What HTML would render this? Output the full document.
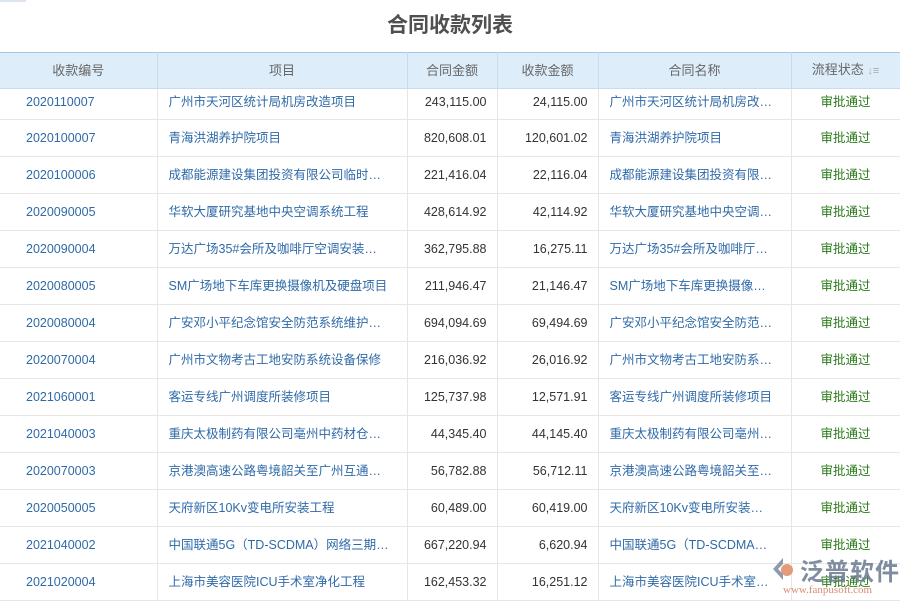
<!DOCTYPE html>
<html><head><meta charset="utf-8"><style>
body{margin:0;width:900px;height:600px;overflow:hidden;background:#fff;font-family:"Liberation Sans","Noto Sans CJK SC",sans-serif;position:relative}
.title{position:absolute;top:12px;left:0;width:900px;text-align:center;font-size:21px;font-weight:bold;color:#505050;line-height:28px}
.topbar{position:absolute;left:0;top:0;width:26px;height:2px;background:#dde6f0}
table{position:absolute;top:52px;left:0;border-collapse:collapse;table-layout:fixed;width:900px;font-size:12.5px}
th,td{line-height:16px;box-sizing:border-box}
th{height:36px;padding:0;background:#deedfa;color:#666;font-weight:normal;border-right:1px solid #c9dcee;border-top:1px solid #a9c6e2;border-bottom:1px solid #c9dcee;font-size:13px}
td{height:37px;border-bottom:1px solid #e6e6e6;border-right:1px solid #e6e6e6;white-space:nowrap;overflow:hidden;padding:0;vertical-align:middle}
tr.first td{height:31px;padding-bottom:5px}
.c1{color:#2f6aa8;padding-left:26px}
.c2{color:#2f6aa8;padding-left:11px}
.n{color:#333;text-align:right;padding-right:10px}
.c5{color:#2f6aa8;padding-left:11px}
.s{color:#2a7a1a;text-align:center}
.wm{position:absolute;top:552px;font-size:24px;color:#6a7a90;font-weight:bold;letter-spacing:1px;opacity:.85}
.wm2{position:absolute;left:783px;top:584px;font-size:11px;color:#d07050;opacity:.8;font-family:"Liberation Serif",serif}
</style></head><body>
<div class="topbar"></div>
<div class="title">合同收款列表</div>
<table>
<colgroup><col style="width:157px"><col style="width:250px"><col style="width:90px"><col style="width:101px"><col style="width:193px"><col style="width:109px"></colgroup>
<tr><th>收款编号</th><th>项目</th><th>合同金额</th><th>收款金额</th><th>合同名称</th><th>流程状态 <span style="color:#aaa;font-size:11px">↓≡</span></th></tr>
<tr class="first"><td class="c1">2020110007</td><td class="c2">广州市天河区统计局机房改造项目</td><td class="n">243,115.00</td><td class="n">24,115.00</td><td class="c5">广州市天河区统计局机房改…</td><td class="s">审批通过</td></tr>
<tr><td class="c1">2020100007</td><td class="c2">青海洪湖养护院项目</td><td class="n">820,608.01</td><td class="n">120,601.02</td><td class="c5">青海洪湖养护院项目</td><td class="s">审批通过</td></tr>
<tr><td class="c1">2020100006</td><td class="c2">成都能源建设集团投资有限公司临时…</td><td class="n">221,416.04</td><td class="n">22,116.04</td><td class="c5">成都能源建设集团投资有限…</td><td class="s">审批通过</td></tr>
<tr><td class="c1">2020090005</td><td class="c2">华软大厦研究基地中央空调系统工程</td><td class="n">428,614.92</td><td class="n">42,114.92</td><td class="c5">华软大厦研究基地中央空调…</td><td class="s">审批通过</td></tr>
<tr><td class="c1">2020090004</td><td class="c2">万达广场35#会所及咖啡厅空调安装…</td><td class="n">362,795.88</td><td class="n">16,275.11</td><td class="c5">万达广场35#会所及咖啡厅…</td><td class="s">审批通过</td></tr>
<tr><td class="c1">2020080005</td><td class="c2">SM广场地下车库更换摄像机及硬盘项目</td><td class="n">211,946.47</td><td class="n">21,146.47</td><td class="c5">SM广场地下车库更换摄像…</td><td class="s">审批通过</td></tr>
<tr><td class="c1">2020080004</td><td class="c2">广安邓小平纪念馆安全防范系统维护…</td><td class="n">694,094.69</td><td class="n">69,494.69</td><td class="c5">广安邓小平纪念馆安全防范…</td><td class="s">审批通过</td></tr>
<tr><td class="c1">2020070004</td><td class="c2">广州市文物考古工地安防系统设备保修</td><td class="n">216,036.92</td><td class="n">26,016.92</td><td class="c5">广州市文物考古工地安防系…</td><td class="s">审批通过</td></tr>
<tr><td class="c1">2021060001</td><td class="c2">客运专线广州调度所装修项目</td><td class="n">125,737.98</td><td class="n">12,571.91</td><td class="c5">客运专线广州调度所装修项目</td><td class="s">审批通过</td></tr>
<tr><td class="c1">2021040003</td><td class="c2">重庆太极制药有限公司亳州中药材仓…</td><td class="n">44,345.40</td><td class="n">44,145.40</td><td class="c5">重庆太极制药有限公司亳州…</td><td class="s">审批通过</td></tr>
<tr><td class="c1">2020070003</td><td class="c2">京港澳高速公路粤境韶关至广州互通…</td><td class="n">56,782.88</td><td class="n">56,712.11</td><td class="c5">京港澳高速公路粤境韶关至…</td><td class="s">审批通过</td></tr>
<tr><td class="c1">2020050005</td><td class="c2">天府新区10Kv变电所安装工程</td><td class="n">60,489.00</td><td class="n">60,419.00</td><td class="c5">天府新区10Kv变电所安装…</td><td class="s">审批通过</td></tr>
<tr><td class="c1">2021040002</td><td class="c2">中国联通5G（TD-SCDMA）网络三期…</td><td class="n">667,220.94</td><td class="n">6,620.94</td><td class="c5">中国联通5G（TD-SCDMA…</td><td class="s">审批通过</td></tr>
<tr><td class="c1">2021020004</td><td class="c2">上海市美容医院ICU手术室净化工程</td><td class="n">162,453.32</td><td class="n">16,251.12</td><td class="c5">上海市美容医院ICU手术室…</td><td class="s">审批通过</td></tr>
</table>
<svg style="position:absolute;left:770px;top:556px" width="26" height="26" viewBox="0 0 26 26"><path d="M13 2 L3 13 L13 24 L13 18 L8 13 L13 8Z" fill="#7a8aa0" opacity=".85"/><circle cx="17" cy="14" r="6" fill="#e08a60" opacity=".85"/></svg>
<div class="wm" style="left:800px">泛普软件</div>
<div class="wm2">www.fanpusoft.com</div>
</body></html>
